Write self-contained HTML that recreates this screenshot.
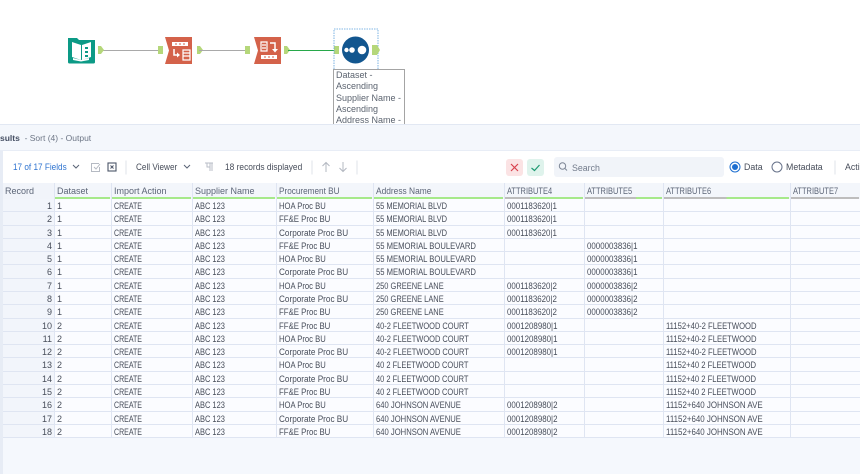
<!DOCTYPE html>
<html><head><meta charset="utf-8"><style>
html,body{margin:0;padding:0;width:860px;height:474px;overflow:hidden;background:#fff;font-family:"Liberation Sans",sans-serif;font-size:9px;color:#474d5a}
.a{position:absolute;white-space:nowrap}
#rows{position:absolute;left:3px;top:199px;width:857px}
.r{display:grid;grid-template-columns:52px 57px 81px 84px 97px 131px 80px 79px 127px 70px;height:13.29px;line-height:14px}
.r div{background:#fbfcff;border-right:1px solid #dfe5f2;border-bottom:1px solid #dfe5f2;box-sizing:border-box;padding-left:2px;overflow:hidden;white-space:nowrap}
.r div:first-child{background:#f2f5fb;text-align:right;padding:0 2px 0 0}
#hd{position:absolute;left:3px;top:183px;display:grid;grid-template-columns:52px 57px 81px 84px 97px 131px 80px 79px 127px 70px;height:16px;width:857px;color:#5c6577}
#hd div{background:#f3f6fb;border-right:1px solid #dfe5f2;box-sizing:border-box;padding-left:2px;line-height:17px;position:relative;white-space:nowrap;overflow:hidden}
#hd i{position:absolute;left:0;right:1px;bottom:0;height:2px;background:#a6e98a}
#hd i.g{background:linear-gradient(90deg,#bdbdbd var(--p),#a6e98a var(--p))}
span{display:inline-block;transform-origin:0 50%}
.c{transform:scaleX(.78)}.b{transform:scaleX(.83)}.h{transform:scaleX(.85)}.f{transform:scaleX(.87)}.p{transform:scaleX(.91)}.n{transform:scaleX(.88)}.m{transform:scaleX(.93)}
</style></head><body>
<div class="a" style="left:0;top:124px;width:860px;height:27px;background:#f4f7fc;border-top:1px solid #e2e8f3;border-bottom:1px solid #e8edf6;box-sizing:border-box"></div>
<div class="a" style="left:0;top:133px;font-size:8.5px;color:#6d7686"><b style="color:#465064">sults</b> &nbsp;- Sort (4) - Output</div>
<div class="a" style="left:0;top:151px;width:3px;height:323px;background:#e7ecf5"></div>
<div class="a" style="left:3px;top:199px;width:857px;height:275px;background:#f5f8fd"></div>

<svg class="a" style="left:0;top:0" width="420" height="130" viewBox="0 0 420 130">
<path d="M68 38h9l2 2h16v22a1.500 1.500 0 0 1-1.500 1.500H69.500A1.500 1.500 0 0 1 68 62z" fill="#0c9a86"/>
<path d="M72 42l9 3v15l-9-3zM91 42l-9 3v15l9-3z" fill="#fff"/>
<path d="M81 60l-8-2v2l8 1.500 8-1.500v-2z" fill="#fff"/>
<path d="M85 47h3v2h-3zM85 51h3v2h-3zM85 55h3v2h-3z" fill="#0c9a86"/>
<path d="M100 50.500H161" stroke="#a9a9a9" stroke-width="1"/>
<path d="M98 46h3l3 4-3 4h-3z" fill="#b5d77a"/><rect x="158" y="46" width="5" height="8" fill="#b5d77a"/>
<path d="M165 37h27v27h-27l4-13.500z" fill="#d4624a"/>
<path d="M172 42h16v4h-16z" fill="#fff"/><path d="M175 44h2M179 44h2M183 44h2" stroke="#d4624a"/>
<path d="M174 49v6h5" stroke="#fff" stroke-width="1.500" fill="none"/><path d="M177 52.500l3 2.500-3 2.500z" fill="#fff"/>
<path d="M183 50h7v10h-7zM183.500 53h6M183.500 56h6" fill="none" stroke="#fff" stroke-width="1.200"/>
<path d="M197 46h3l3 4-3 4h-3z" fill="#b5d77a"/>
<path d="M199 50.500H249" stroke="#a9a9a9" stroke-width="1"/>
<rect x="245" y="46" width="5" height="8" fill="#b5d77a"/>
<path d="M254 37h27v27h-27l4-13.500z" fill="#d4624a"/>
<path d="M261 42h6v9h-6zM262 45h4M262 48h4" fill="none" stroke="#fff" stroke-width="1.200"/>
<path d="M270 43h5v7" fill="none" stroke="#fff" stroke-width="1.500"/><path d="M272 49h6l-3 3.500z" fill="#fff"/>
<path d="M261 55h16v4h-16z" fill="#fff"/><path d="M264 57h2M268 57h2M272 57h2" stroke="#d4624a"/>
<path d="M284 46h3l3 4-3 4h-3z" fill="#b5d77a"/>
<path d="M288 50.500H338" stroke="#27a84a" stroke-width="1"/>
<rect x="334" y="46" width="5" height="8" fill="#b5d77a"/>
<rect x="334" y="29" width="44" height="41" fill="none" stroke="#5aa0dc" stroke-width=".8" stroke-dasharray="1.500 1"/>
<circle cx="355.500" cy="50" r="13.500" fill="#12568f"/>
<circle cx="346.500" cy="50" r="2.200" fill="#fff"/><circle cx="352" cy="50" r="2.800" fill="#fff"/><circle cx="362" cy="50" r="4.300" fill="#fff"/>
<path d="M372 45h5l3 5-3 5h-5z" fill="#b5d77a"/>
</svg>

<div class="a" style="left:333px;top:69px;width:72px;height:55px;border:1px solid #a4a4a4;border-bottom:0;box-sizing:border-box;background:#fff;padding:0 0 0 2px;line-height:11.300px;font-size:9px;color:#5c6470;overflow:hidden;white-space:normal">Dataset -<br>Ascending<br>Supplier Name -<br>Ascending<br>Address Name -</div>

<div class="a" style="left:13px;top:162px;color:#2f74d0;font-size:8.800px"><span class="m">17 of 17 Fields</span></div>
<svg class="a" style="left:0;top:151px" width="860" height="32" viewBox="0 0 860 32">
<path d="M73 14l3 3 3-3M184 14l3 3 3-3" fill="none" stroke="#5a6476" stroke-width="1"/>
<path d="M99 12.500h-7.500v8h8V16M94 16l2 2 4-5" fill="none" stroke="#b5bac3"/>
<rect x="108" y="12" width="8" height="8" fill="none" stroke="#4c5568" stroke-width="1.100"/><path d="M110.500 14.500l3 3M113.500 14.500l-3 3" stroke="#4c5568"/>
<path d="M126 9.500v14M312 9.500v14M357 9.500v14M835 9.500v14" stroke="#dfe3ea"/>
<path d="M205 12h8M210 12v8M212 12v8M210 12h-3v4h3" fill="none" stroke="#b9bec7"/>
<path d="M326 21v-9M322.500 15l3.500-3.500 3.500 3.500M343 11v9M339.500 17l3.500 3.500 3.500-3.500" fill="none" stroke="#b3b8c1"/>
<rect x="506" y="8" width="17" height="17" rx="3" fill="#fbe3e4"/><path d="M511 13l7 7M518 13l-7 7" stroke="#d8424e" stroke-width="1.200"/>
<rect x="527" y="8" width="17" height="17" rx="3" fill="#dff3ec"/><path d="M531.500 17l3 2.500 5-5.500" fill="none" stroke="#1f9a72" stroke-width="1.200"/>
<rect x="554" y="6" width="170" height="20" rx="3" fill="#f1f4f9"/>
<circle cx="562.500" cy="15" r="3.200" fill="none" stroke="#7d8696"/><path d="M565 17.500l2 2" stroke="#7d8696"/>
<circle cx="735" cy="16" r="5" fill="#fff" stroke="#1e6fd0" stroke-width="1"/><circle cx="735" cy="16" r="3" fill="#1e6fd0"/>
<circle cx="777" cy="16" r="5" fill="#fff" stroke="#67728a" stroke-width="1"/>
</svg>
<div class="a" style="left:136px;top:162px;font-size:8.800px"><span class="m">Cell Viewer</span></div>
<div class="a" style="left:225px;top:162px;font-size:9px"><span class="m">18 records displayed</span></div>
<div class="a" style="left:572px;top:163px;color:#737c8c;font-size:8.800px">Search</div>
<div class="a" style="left:744px;top:162px;font-size:8.800px">Data</div>
<div class="a" style="left:786px;top:162px;font-size:8.800px">Metadata</div>
<div class="a" style="left:845px;top:162px;font-size:8.800px">Acti</div>

<div id="hd">
<div style="background:#f1f4fa">Record</div>
<div>Dataset<i></i></div>
<div>Import Action<i></i></div>
<div>Supplier Name<i></i></div>
<div><span class="p">Procurement BU</span><i></i></div>
<div><span class="m">Address Name</span><i></i></div>
<div><span class="b">ATTRIBUTE4</span><i class="g" style="--p:32%"></i></div>
<div><span class="b">ATTRIBUTE5</span><i class="g" style="--p:66%"></i></div>
<div><span class="b">ATTRIBUTE6</span><i class="g" style="--p:50%"></i></div>
<div><span class="b">ATTRIBUTE7</span><i style="background:#bdbdbd"></i></div>
</div>

<div id="rows">
<div class="r"><div>1</div><div>1</div><div><span class="c">CREATE</span></div><div><span class="b">ABC 123</span></div><div><span class="h">HOA Proc BU</span></div><div><span class="b">55 MEMORIAL BLVD</span></div><div><span class="n">0001183620|1</span></div><div></div><div></div><div></div></div>
<div class="r"><div>2</div><div>1</div><div><span class="c">CREATE</span></div><div><span class="b">ABC 123</span></div><div><span class="f">FF&amp;E Proc BU</span></div><div><span class="b">55 MEMORIAL BLVD</span></div><div><span class="n">0001183620|1</span></div><div></div><div></div><div></div></div>
<div class="r"><div>3</div><div>1</div><div><span class="c">CREATE</span></div><div><span class="b">ABC 123</span></div><div><span class="p">Corporate Proc BU</span></div><div><span class="b">55 MEMORIAL BLVD</span></div><div><span class="n">0001183620|1</span></div><div></div><div></div><div></div></div>
<div class="r"><div>4</div><div>1</div><div><span class="c">CREATE</span></div><div><span class="b">ABC 123</span></div><div><span class="f">FF&amp;E Proc BU</span></div><div><span class="h">55 MEMORIAL BOULEVARD</span></div><div></div><div><span class="n">0000003836|1</span></div><div></div><div></div></div>
<div class="r"><div>5</div><div>1</div><div><span class="c">CREATE</span></div><div><span class="b">ABC 123</span></div><div><span class="h">HOA Proc BU</span></div><div><span class="h">55 MEMORIAL BOULEVARD</span></div><div></div><div><span class="n">0000003836|1</span></div><div></div><div></div></div>
<div class="r"><div>6</div><div>1</div><div><span class="c">CREATE</span></div><div><span class="b">ABC 123</span></div><div><span class="p">Corporate Proc BU</span></div><div><span class="h">55 MEMORIAL BOULEVARD</span></div><div></div><div><span class="n">0000003836|1</span></div><div></div><div></div></div>
<div class="r"><div>7</div><div>1</div><div><span class="c">CREATE</span></div><div><span class="b">ABC 123</span></div><div><span class="h">HOA Proc BU</span></div><div><span class="b">250 GREENE LANE</span></div><div><span class="n">0001183620|2</span></div><div><span class="n">0000003836|2</span></div><div></div><div></div></div>
<div class="r"><div>8</div><div>1</div><div><span class="c">CREATE</span></div><div><span class="b">ABC 123</span></div><div><span class="p">Corporate Proc BU</span></div><div><span class="b">250 GREENE LANE</span></div><div><span class="n">0001183620|2</span></div><div><span class="n">0000003836|2</span></div><div></div><div></div></div>
<div class="r"><div>9</div><div>1</div><div><span class="c">CREATE</span></div><div><span class="b">ABC 123</span></div><div><span class="f">FF&amp;E Proc BU</span></div><div><span class="b">250 GREENE LANE</span></div><div><span class="n">0001183620|2</span></div><div><span class="n">0000003836|2</span></div><div></div><div></div></div>
<div class="r"><div>10</div><div>2</div><div><span class="c">CREATE</span></div><div><span class="b">ABC 123</span></div><div><span class="f">FF&amp;E Proc BU</span></div><div><span class="b">40-2 FLEETWOOD COURT</span></div><div><span class="n">0001208980|1</span></div><div></div><div><span class="h">11152+40-2 FLEETWOOD</span></div><div></div></div>
<div class="r"><div>11</div><div>2</div><div><span class="c">CREATE</span></div><div><span class="b">ABC 123</span></div><div><span class="h">HOA Proc BU</span></div><div><span class="b">40-2 FLEETWOOD COURT</span></div><div><span class="n">0001208980|1</span></div><div></div><div><span class="h">11152+40-2 FLEETWOOD</span></div><div></div></div>
<div class="r"><div>12</div><div>2</div><div><span class="c">CREATE</span></div><div><span class="b">ABC 123</span></div><div><span class="p">Corporate Proc BU</span></div><div><span class="b">40-2 FLEETWOOD COURT</span></div><div><span class="n">0001208980|1</span></div><div></div><div><span class="h">11152+40-2 FLEETWOOD</span></div><div></div></div>
<div class="r"><div>13</div><div>2</div><div><span class="c">CREATE</span></div><div><span class="b">ABC 123</span></div><div><span class="h">HOA Proc BU</span></div><div><span class="b">40 2 FLEETWOOD COURT</span></div><div></div><div></div><div><span class="h">11152+40 2 FLEETWOOD</span></div><div></div></div>
<div class="r"><div>14</div><div>2</div><div><span class="c">CREATE</span></div><div><span class="b">ABC 123</span></div><div><span class="p">Corporate Proc BU</span></div><div><span class="b">40 2 FLEETWOOD COURT</span></div><div></div><div></div><div><span class="h">11152+40 2 FLEETWOOD</span></div><div></div></div>
<div class="r"><div>15</div><div>2</div><div><span class="c">CREATE</span></div><div><span class="b">ABC 123</span></div><div><span class="f">FF&amp;E Proc BU</span></div><div><span class="b">40 2 FLEETWOOD COURT</span></div><div></div><div></div><div><span class="h">11152+40 2 FLEETWOOD</span></div><div></div></div>
<div class="r"><div>16</div><div>2</div><div><span class="c">CREATE</span></div><div><span class="b">ABC 123</span></div><div><span class="h">HOA Proc BU</span></div><div><span class="h">640 JOHNSON AVENUE</span></div><div><span class="n">0001208980|2</span></div><div></div><div><span class="n">11152+640 JOHNSON AVE</span></div><div></div></div>
<div class="r"><div>17</div><div>2</div><div><span class="c">CREATE</span></div><div><span class="b">ABC 123</span></div><div><span class="p">Corporate Proc BU</span></div><div><span class="h">640 JOHNSON AVENUE</span></div><div><span class="n">0001208980|2</span></div><div></div><div><span class="n">11152+640 JOHNSON AVE</span></div><div></div></div>
<div class="r"><div>18</div><div>2</div><div><span class="c">CREATE</span></div><div><span class="b">ABC 123</span></div><div><span class="f">FF&amp;E Proc BU</span></div><div><span class="h">640 JOHNSON AVENUE</span></div><div><span class="n">0001208980|2</span></div><div></div><div><span class="n">11152+640 JOHNSON AVE</span></div><div></div></div>
</div>
</body></html>
